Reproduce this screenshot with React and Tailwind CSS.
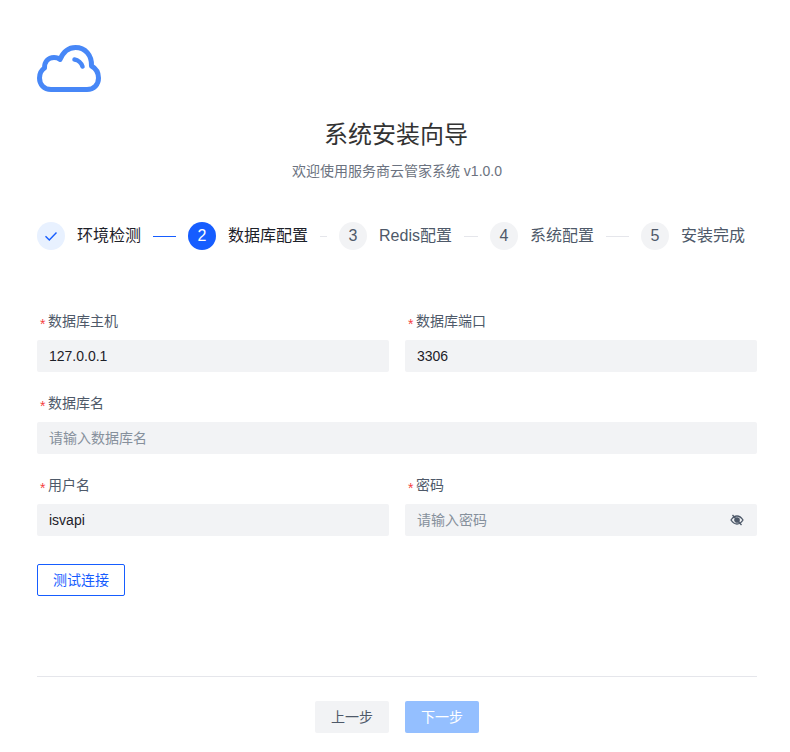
import React from "react";

const font = { fontFamily: '"Liberation Sans","Noto Sans CJK SC",sans-serif' };

function Cloud() {
  return (
    <svg width="64" height="47" viewBox="0 0 64 47" fill="none" stroke="#4787f7" strokeWidth="5" strokeLinecap="round" strokeLinejoin="round" className="block">
      <path d="M14 44.5 H50 C57 44.5 61.5 39.5 61.5 33 C61.5 27.5 59 23.5 54.5 21 C55 10 48 2.5 38.5 2.5 C31 2.5 26 7.5 23 14.5 C21.5 13 19.5 12.5 17 12.5 C11 12.5 7.5 17 7.5 23 C4.5 25 2.5 28.5 2.5 33 C2.5 39.5 7 44.5 14 44.5 Z" />
      <path d="M37.5 14.5 C41 15 44.5 18 45.5 21.5" strokeWidth="4.5" />
    </svg>
  );
}

function Step({ n, label, state }) {
  return (
    <div className="flex items-center gap-3 shrink-0">
      <div
        className={
          "w-7 h-7 rounded-full flex items-center justify-center text-base " +
          (state === "done"
            ? "bg-[#e8f1ff]"
            : state === "active"
              ? "bg-[#165dff] text-white"
              : "bg-[#f2f3f5] text-[#4e5969]")
        }
      >
        {state === "done" ? (
          <svg width="14" height="14" viewBox="0 0 14 14" fill="none" stroke="#165dff" strokeWidth="1.4">
            <path d="M1.5 7.2 L5.3 11 L12.5 3.5" />
          </svg>
        ) : (
          n
        )}
      </div>
      <span className={"text-base leading-6 " + (state === "todo" ? "text-[#4e5969]" : "text-[#1d2129]")}>{label}</span>
    </div>
  );
}

function Line({ w, active }) {
  return <div className={"h-px mx-3 " + w + " " + (active ? "bg-[#165dff]" : "bg-[#e5e6eb]")} />;
}

function Field({ label, value, placeholder, eye, className = "" }) {
  return (
    <div className={className}>
      <label className="flex h-[22px] mb-2 items-center text-sm leading-[22px] text-[#4e5969]">
        <span className="w-[11px] pl-[3px] text-[#f53f3f] text-sm leading-none pt-[6px]">*</span>
        {label}
      </label>
      <div className="h-8 bg-[#f2f3f5] rounded-[2px] px-3 flex items-center justify-between text-sm">
        <span className={value ? "text-[#1d2129]" : "text-[#86909c]"}>{value || placeholder}</span>
        {eye && (
          <svg width="14" height="14" viewBox="0 0 14 14" fill="none" stroke="#4e5969" strokeWidth="1.3" className="-translate-x-[1px]">
            <path d="M1 7 C3 4 5 3 7 3 C9 3 11 4 13 7 C11 10 9 11 7 11 C5 11 3 10 1 7 Z" />
            <circle cx="7" cy="7" r="2.2" fill="#4e5969" />
            <path d="M2.5 2 L11.5 12" />
          </svg>
        )}
      </div>
    </div>
  );
}

export default function App() {
  return (
    <div className="w-[790px] h-[752px] bg-white pl-[37px] pr-[33px] pt-[45px] overflow-hidden" style={font}>
      <Cloud />
      <h1 className="mt-[27px] text-2xl leading-8 text-center text-[#333333] font-normal -translate-x-[1px]">系统安装向导</h1>
      <p className="mt-[9px] text-sm leading-[22px] text-center text-[#6b7280]">欢迎使用服务商云管家系统 v1.0.0</p>

      <div className="mt-[40px] flex items-center">
        <Step n={1} label="环境检测" state="done" />
        <Line w="w-[23px]" active />
        <Step n={2} label="数据库配置" state="active" />
        <Line w="w-[7px]" />
        <Step n={3} label="Redis配置" state="todo" />
        <Line w="w-[14px]" />
        <Step n={4} label="系统配置" state="todo" />
        <Line w="w-[23px]" />
        <Step n={5} label="安装完成" state="todo" />
      </div>

      <div className="mt-[60px] grid grid-cols-2 gap-x-4 gap-y-5">
        <Field label="数据库主机" value="127.0.0.1" />
        <Field label="数据库端口" value="3306" />
        <Field label="数据库名" placeholder="请输入数据库名" className="col-span-2" />
        <Field label="用户名" value="isvapi" />
        <Field label="密码" placeholder="请输入密码" eye />
      </div>

      <button className="mt-7 w-[88px] h-8 border border-[#165dff] rounded-[2px] text-sm text-[#165dff] bg-white flex items-center justify-center">
        测试连接
      </button>

      <div className="mt-20 border-t border-[#e5e6eb] pt-6 flex justify-center gap-4">
        <button className="w-[74px] h-8 rounded-[2px] bg-[#f2f3f5] text-sm text-[#4e5969]">上一步</button>
        <button className="w-[74px] h-8 rounded-[2px] bg-[#94bfff] text-sm text-white">下一步</button>
      </div>
    </div>
  );
}
